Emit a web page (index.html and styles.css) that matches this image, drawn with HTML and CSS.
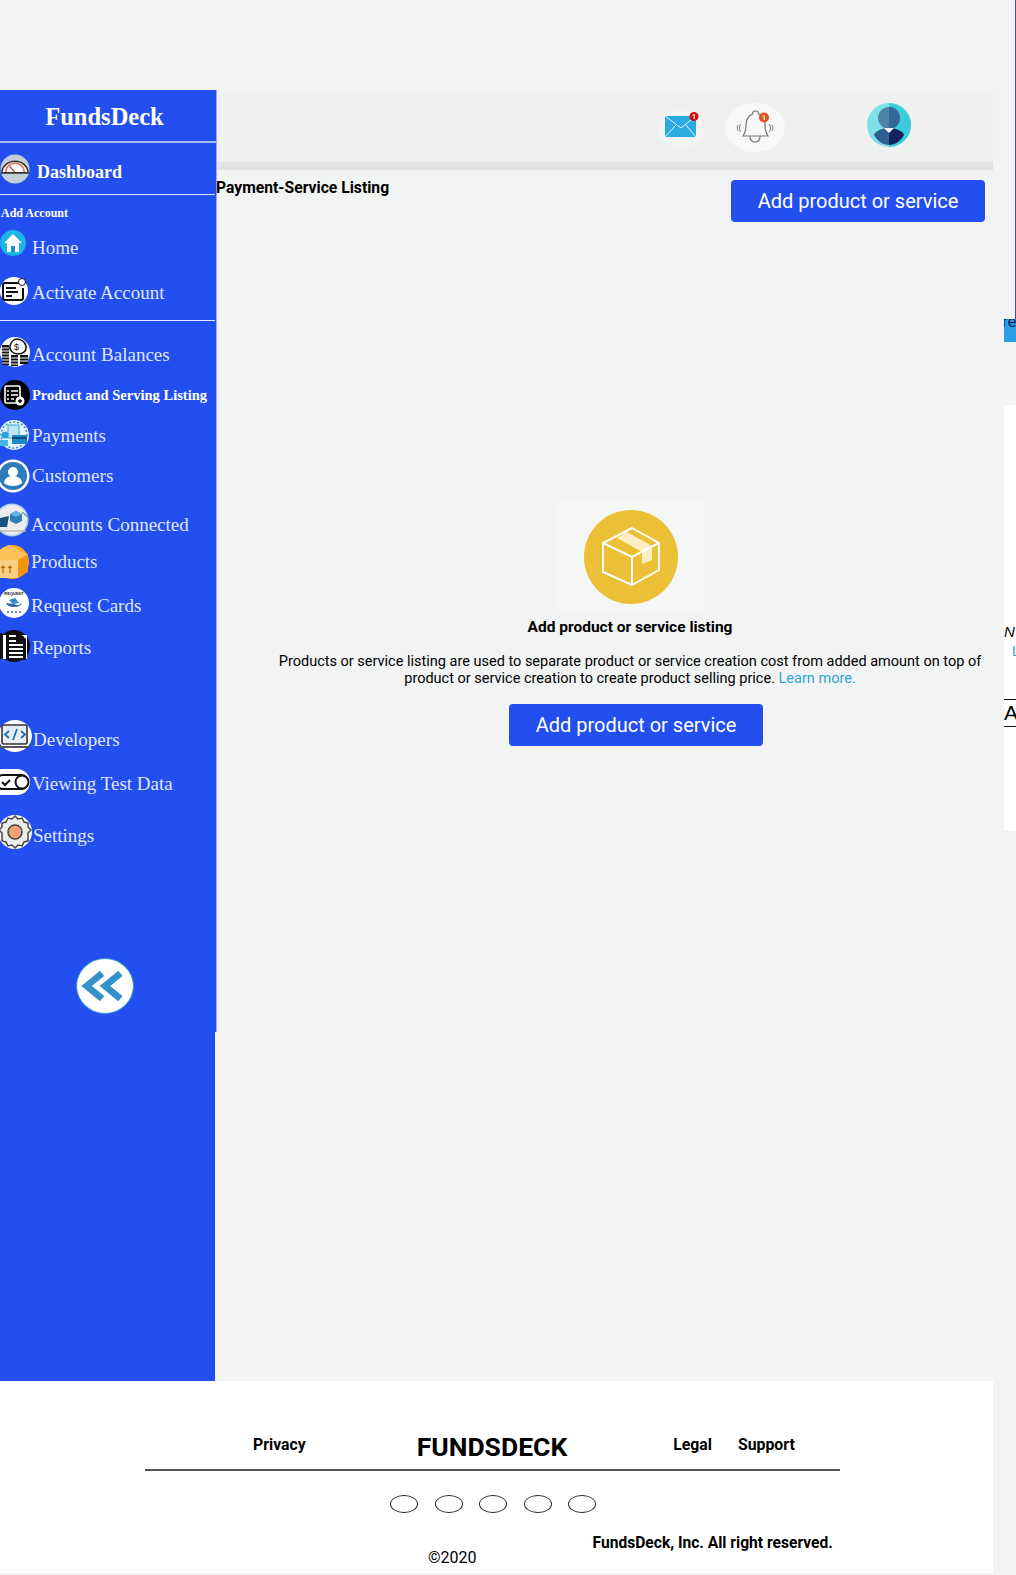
FILE: index.html
```html
<!DOCTYPE html>
<html lang="en">
<head>
  <meta charset="UTF-8">
  <meta name="viewport" content="width=device-width, initial-scale=1.0">
  <title>FundsDeck</title>
  <link rel="stylesheet" href="styles.css">
</head>
<body>
  <div class="layout">
    <aside class="sidebar">
      <div class="sidebar-top">
        <div class="brand">FundsDeck</div>
        <a class="dash">
          <svg class="ico" viewBox="0 0 32 30"><circle cx="15.500" cy="15" r="15" fill="#c3d0d8"/><path d="M2 19a13.500 12 0 0 1 27 0z" fill="#fff" stroke="#333" stroke-width="1.600"/><path d="M6 18a9.500 9 0 0 1 19 0" fill="none" stroke="#e2765a" stroke-width="1.800"/><path d="M15 18l-5-6" stroke="#b5432e" stroke-width="1.400"/></svg>
          <span>Dashboard</span>
        </a>
        <div class="group-title">Add Account</div>
        <a class="item down-2">
          <svg class="ico" viewBox="0 0 30 30"><circle cx="13" cy="14" r="13" fill="#1cb5e6"/><path d="M13 5L4 14h3v9h12v-9h3z" fill="#fff"/><rect x="11" y="17" width="4" height="6" fill="#1c8fd0"/></svg>
          <span>Home</span>
        </a>
        <a class="item gap-17">
          <svg class="ico" viewBox="0 0 30 30"><circle cx="14" cy="15" r="14" fill="#fff"/><path d="M20 7H5a2 2 0 0 0-2 2v13a2 2 0 0 0 2 2h16a2 2 0 0 0 2-2V12" fill="none" stroke="#111" stroke-width="2"/><path d="M6 12h10M6 16h12M6 20h6" stroke="#111" stroke-width="1.800"/><circle cx="22" cy="6" r="3.500" fill="#fff" stroke="#111" stroke-width="1"/></svg>
          <span>Activate Account</span>
        </a>
        <div class="rule"></div>
        <a class="item gap-16 down-1">
          <svg class="ico" viewBox="0 0 30 30"><circle cx="15" cy="15" r="15" fill="#fff"/><path d="M10 9c1-4 4-7 7-7s8 2 9 7-3 8-8 8-9-4-8-8z" fill="#fff" stroke="#111" stroke-width="1.500"/><text class="ico-dollar" x="14" y="13">$</text><path d="M2 8h7v20H2zM11 18h7v11h-7zM20 18h8v9h-8z" fill="#111"/><path d="M2 11h7M2 14h7M2 17h7M2 20h7M2 23h7M2 26h7M11 21h7M11 24h7M11 27h7M20 21h8M20 24h8" stroke="#fff"/></svg>
          <span>Account Balances</span>
        </a>
        <a class="item item-bold gap-13 up-1">
          <svg class="ico" viewBox="0 0 30 30"><circle cx="15" cy="15" r="15" fill="#000"/><rect x="5" y="6" width="15" height="17" rx="1.500" fill="none" stroke="#fff" stroke-width="1.600"/><path d="M7 11h2M11 11h7M7 15h2M11 15h7M7 19h2M11 19h3" stroke="#fff" stroke-width="1.600"/><circle cx="20" cy="21" r="4.500" fill="#fff"/><path d="M18 21h4M20 19v4" stroke="#000" stroke-width="1.300"/></svg>
          <span>Product and Serving Listing</span>
        </a>
        <a class="item gap-10 up-1">
          <svg class="ico" viewBox="0 0 30 30"><circle cx="14" cy="15" r="15" fill="#e6f6fb"/><circle cx="14" cy="15" r="13" fill="none" stroke="#2a92c9" stroke-width="1.500" stroke-dasharray="2 2"/><rect x="8" y="5" width="11" height="13" fill="#bfe6f5" stroke="#35a3d6"/><circle cx="5" cy="15" r="3.500" fill="#2aa0d8"/><rect x="12" y="15" width="15" height="9" rx="1" fill="#1d88c4"/><rect x="12" y="17" width="15" height="2" fill="#0c4a78"/><rect x="0" y="20" width="8" height="6" fill="#46b8e0"/></svg>
          <span>Payments</span>
        </a>
        <a class="item gap-11 up-2">
          <svg class="ico ico-34" viewBox="0 0 30 34"><circle cx="13" cy="17" r="16.500" fill="#fff"/><circle cx="13" cy="17" r="14" fill="#2b7cb9"/><circle cx="13" cy="13" r="5" fill="#fff"/><path d="M4 24c0-5 5-7 9-7s9 2 9 7c-2 2-6 3-9 3s-7-1-9-3z" fill="#fff"/></svg>
          <span>Customers</span>
        </a>
        <a class="item item-tight gap-14 down-3">
          <svg class="ico ico-34" viewBox="0 0 30 34"><circle cx="12" cy="17" r="16.500" fill="#a9d4ee"/><circle cx="12" cy="17" r="15" fill="#ececec"/><path d="M10 11l6-3 6 3v7l-6 3-6-3z" fill="#2d7fb5"/><path d="M16 8l6 3-6 3-6-3z" fill="#62b4e0"/><path d="M0 15l9-2-2 11H-3z" fill="#16557f"/><path d="M22 9l6 5" stroke="#7f97a8" stroke-width="1.500"/><path d="M-2 28h28" stroke="#bdbdbd" stroke-width="1.500"/></svg>
          <span>Accounts Connected</span>
        </a>
        <a class="item item-tight gap-12 up-2">
          <svg class="ico ico-34" viewBox="0 0 30 34"><circle cx="12" cy="17" r="17" fill="#fca91e"/><path d="M-3 6L9 0l19 9-8 8H-3z" fill="#fdc05a"/><rect x="-3" y="15" width="21" height="18" fill="#fbd084"/><path d="M18 15l10-6v18l-10 6z" fill="#ef9512"/><path d="M3 28v-7m-2 2l2-2 2 2M10 28v-7m-2 2l2-2 2 2" fill="none" stroke="#b86f0a" stroke-width="1.200"/></svg>
          <span>Products</span>
        </a>
        <a class="item item-tight gap-11 down-1">
          <svg class="ico" viewBox="0 0 30 30"><circle cx="14" cy="15" r="15" fill="#fff"/><text class="ico-tiny" x="14" y="7">REQUEST</text><path d="M6 15a8 4 0 0 0 16 0c-2 2-5 3-8 1z" fill="#2b6c9f"/><path d="M9 12l6-2 4 5-6 1z" fill="#2e8ac5"/><path d="M7 24h2M11 24h2M15 24h2M19 24h2" stroke="#3b6f96" stroke-width="1.500"/></svg>
          <span>Request Cards</span>
        </a>
        <a class="item gap-13">
          <svg class="ico ico-32" viewBox="0 0 30 32"><circle cx="14" cy="16" r="16" fill="#0c0c1e"/><path d="M1 5h26v24H1z" fill="#fff"/><path d="M6 2h13l7 7v21H6z" fill="#111"/><path d="M0 3h3v26H0z" fill="#111"/><path d="M9 6h7M9 11h7" stroke="#fff" stroke-width="2"/><path d="M9 15h14M9 19h14M9 23h14M9 27h14" stroke="#fff" stroke-width="2"/></svg>
          <span>Reports</span>
        </a>
        <a class="item item-wide gap-60 down-2">
          <svg class="ico ico-w32" viewBox="0 0 32 32"><ellipse cx="15" cy="16" rx="17" ry="16" fill="#fff"/><rect x="2" y="5" width="25" height="19" rx="1.500" fill="#e7eef3" stroke="#333" stroke-width="1.600"/><path d="M-1 26h30v2H-1z" fill="#555"/><path d="M9 11l-4 3.500 4 3.500M21 11l4 3.500-4 3.500M17 9l-4 11" fill="none" stroke="#1f6fb0" stroke-width="1.800"/></svg>
          <span>Developers</span>
        </a>
        <a class="item gap-16">
          <svg class="ico" viewBox="0 0 30 30"><rect x="-14" y="2" width="44" height="26" rx="13" fill="#fff"/><rect x="-4" y="8" width="32" height="14" rx="7" fill="#fff" stroke="#111" stroke-width="2"/><circle cx="22" cy="15" r="6.500" fill="#fff" stroke="#111" stroke-width="2"/><path d="M2 15l3 3 5-5" fill="none" stroke="#111" stroke-width="2"/></svg>
          <span>Viewing Test Data</span>
        </a>
        <a class="item item-wide gap-20 down-2">
          <svg class="ico ico-w36" viewBox="0 0 32 36"><circle cx="15" cy="18" r="17" fill="#fff"/><path d="M15 2l3 3 4-1 2 4 4 1 0 4 3 3-3 3 0 4 0 4-4 1-2 4-4-1-3 3-3-3-4 1-2-4-4-1 0-4 0-4-3-3 3-3 0-4 4-1 2-4 4 1z" fill="#ececec" stroke="#444" stroke-width="1.500"/><circle cx="15" cy="18" r="7" fill="#f4a273" stroke="#444" stroke-width="1.500"/></svg>
          <span>Settings</span>
        </a>
        <button class="collapse">
          <svg viewBox="0 0 56 56"><path d="M25 15L9 28l16 13M44 15L28 28l16 13" fill="none" stroke="#3392ca" stroke-width="7"/></svg>
        </button>
      </div>
    </aside>

    <main class="content">
      <header class="topbar">
        <div class="mail-pill">
          <svg viewBox="0 0 36 26" class="mail-icon"><rect x="2" y="4" width="31" height="21" fill="#2aabe2"/><path d="M2 4l16 12L33 4M2 25l11-12M33 25L23 13" fill="none" stroke="#e8f6fc" stroke-width="1"/><circle cx="31" cy="4.500" r="4.500" fill="#d40f14"/><text class="badge-num" x="31" y="6.500">1</text></svg>
        </div>
        <div class="bell-pill">
          <svg viewBox="0 0 40 36" class="bell-icon"><path d="M20 1c-1.500 0-2.500 1-2.500 3-4.500 2-6.500 6-6.500 11 0 5-1 8-3 11h25c-2-3-3-6-3-11 0-5-2-9-6.500-11 0-2-1-3-2.500-3z" fill="none" stroke="#777" stroke-width="1.200"/><path d="M15 26c0 4 2 6 5 6s5-2 5-6" fill="none" stroke="#777" stroke-width="1.200"/><path d="M6 14c-2 2-2 6 0 8M3 15c-1 2-1 4 0 6M34 14c2 2 2 6 0 8M37 15c1 2 1 4 0 6" fill="none" stroke="#777"/><circle cx="29" cy="7.500" r="5" fill="#e4521e"/><text class="badge-num" x="29" y="10">1</text></svg>
        </div>
        <svg viewBox="0 0 44 44" class="avatar"><circle cx="22" cy="22" r="22" fill="#7fe0ea"/><path d="M22 0a22 22 0 0 1 0 44z" fill="#3bcbdb"/><circle cx="22" cy="15" r="11" fill="#4f82a8"/><path d="M22 4a11 11 0 0 1 0 22z" fill="#33699a"/><path d="M7 32c1-4 8-6 11-7l4 4v13c-6 0-12-4-15-10z" fill="#2e5f8e"/><path d="M37 32c-1-4-8-6-11-7l-4 4v13c6 0 12-4 15-10z" fill="#12225a"/><path d="M17 25h10l-5 5z" fill="#fff"/></svg>
      </header>

      <div class="listing-head">
        <h2>Payment-Service Listing</h2>
        <button class="btn">Add product or service</button>
      </div>

      <section class="empty">
        <div class="empty-pic">
          <svg viewBox="0 0 94 94" class="box-icon"><circle cx="47" cy="47" r="47" fill="#ebc036"/><path d="M33 28l10-6 25 14v14l-10 4V42z" fill="#fbeec2"/><path d="M48 18l27 15v27L48 75 19 62V33z" fill="none" stroke="#fff" stroke-width="2"/><path d="M19 33l29 14 27-14M48 47v28" fill="none" stroke="#fff" stroke-width="2"/></svg>
        </div>
        <h3>Add product or service listing</h3>
        <p>Products or service listing are used to separate product or service creation cost from added amount on top of product or service creation to create product selling price. <a class="link">Learn more.</a></p>
        <button class="btn">Add product or service</button>
      </section>
    </main>
  </div>

  <footer class="footer">
    <div class="footer-links">
      <a class="privacy">Privacy</a>
      <span class="footer-logo">FUNDSDECK</span>
      <a class="legal">Legal</a>
      <a class="support">Support</a>
    </div>
    <div class="socials">
      <span class="dot"></span><span class="dot"></span><span class="dot"></span><span class="dot"></span><span class="dot"></span>
    </div>
    <div class="footer-bottom">
      <span class="year">©2020</span>
      <span class="rights">FundsDeck, Inc. All right reserved.</span>
    </div>
  </footer>

  <!-- clipped bits of the page behind, at the window's right edge -->
  <div class="edge-line"></div>
  <div class="edge-chip"><span>re</span></div>
  <div class="edge-panel">
    <i class="edge-n">N</i>
    <span class="edge-l">L</span>
    <span class="edge-a">A</span>
  </div>
</body>
</html>
```

FILE: styles.css
```css
body {
  margin: 0;
  width: 1016px;
  height: 1575px;
  overflow: hidden;
  position: relative;
  background-color: #f2f4f4;
  font-family: Roboto, Arial, sans-serif;
  color: #000;
}
.layout {
  display: flex;
  width: 993px;
  height: 1291px;
  padding-top: 90px;
}

/* sidebar */
.sidebar {
  width: 215px;
  flex-shrink: 0;
  background-color: #234ff0;
  color: #dfe6fd;
  font-family: "Liberation Serif", serif;
}
.sidebar-top {
  box-sizing: border-box;
  width: 217px;
  height: 942px;
  background-color: #234ff0;
  border-right: 1px solid #93a8f7;
}
.brand {
  height: 51px;
  line-height: 53px;
  padding-right: 7px;
  text-align: center;
  font-size: 24.500px;
  font-weight: bold;
  color: #fff;
  border-bottom: 2px solid #a5b7f8;
}
.dash {
  display: flex;
  align-items: center;
  gap: 6px;
  height: 51px;
  margin-right: 1px;
  font-size: 18px;
  font-weight: bold;
  color: #fff;
  border-bottom: 1px solid #dfe6fd;
}
.dash span {
  padding-top: 7px;
}
.dash .ico {
  width: 31px;
  height: 30px;
}
.group-title {
  padding-left: 1px;
  margin-top: 10px;
  line-height: 16px;
  font-size: 12px;
  font-weight: bold;
  color: #fff;
}
.item {
  display: flex;
  align-items: center;
  height: 30px;
  margin-top: 8px;
  font-size: 19px;
}
.item span {
  margin-left: 32px;
  padding-top: 3px;
  white-space: nowrap;
}
.item .ico {
  width: 30px;
  height: 30px;
  margin-right: -30px;
  flex-shrink: 0;
}
.item .ico-34 {
  height: 34px;
}
.item .ico-32 {
  height: 32px;
}
.item .ico-w32 {
  width: 32px;
  height: 32px;
  margin-right: -32px;
}
.item .ico-w36 {
  width: 32px;
  height: 36px;
  margin-right: -32px;
}
.item-tight span {
  margin-left: 31px;
}
.item-wide span {
  margin-left: 33px;
}
.item-bold {
  font-size: 14.500px;
  font-weight: bold;
  color: #fff;
}
/* the labels don't sit centred on their icons, each one is off a little */
.down-1 span { padding-top: 5px; }
.down-2 span { padding-top: 7px; }
.down-3 span { padding-top: 9px; }
.up-1 span { padding-top: 1px; }
.up-2 span { padding: 0 0 1px; }
.gap-10 { margin-top: 10px; }
.gap-11 { margin-top: 11px; }
.gap-12 { margin-top: 12px; }
.gap-13 { margin-top: 13px; }
.gap-14 { margin-top: 14px; }
.gap-16 { margin-top: 16px; }
.gap-17 { margin-top: 17px; }
.gap-20 { margin-top: 20px; }
.gap-60 { margin-top: 60px; }
.rule {
  height: 1px;
  margin: 14px 1px 0 0;
  background-color: #dfe6fd;
}
.ico-dollar {
  font-family: "Liberation Sans", sans-serif;
  font-size: 9px;
  fill: #111;
}
.ico-tiny {
  font-family: "Liberation Sans", sans-serif;
  font-size: 4px;
  font-weight: bold;
  text-anchor: middle;
  fill: #222;
}
.collapse {
  display: block;
  width: 58px;
  height: 56px;
  margin: 111px 0 0 76px;
  padding: 0;
  border: 1px solid #3392ca;
  border-radius: 50%;
  background-color: #fff;
}
.collapse svg {
  display: block;
  width: 100%;
  height: 100%;
}

/* main column */
.content {
  flex: 1;
  min-width: 0;
  padding-top: 4px;
}
.topbar {
  display: flex;
  align-items: flex-start;
  box-sizing: border-box;
  height: 76px;
  margin-left: 2px;
  padding: 9px 0 0 441px;
  background: linear-gradient(to bottom, #eff1f1 89%, #e3e5e4 90%, #dfe1e0 100%);
}
.mail-pill {
  display: flex;
  justify-content: center;
  width: 46px;
  height: 38px;
  margin-top: 7px;
  border-radius: 50%;
  background-color: #f4f4f4;
}
.mail-icon {
  width: 36px;
  height: 26px;
  margin-top: 2px;
}
.bell-pill {
  display: flex;
  align-items: center;
  justify-content: center;
  width: 60px;
  height: 49px;
  margin-left: 21px;
  border-radius: 50%;
  background-color: #f8f8f8;
}
.bell-icon {
  width: 40px;
  height: 36px;
}
.badge-num {
  font-family: Roboto, sans-serif;
  font-size: 7px;
  font-weight: bold;
  text-anchor: middle;
  fill: #fff;
}
.avatar {
  width: 44px;
  height: 44px;
  margin-left: 82px;
}
.listing-head {
  display: flex;
  justify-content: space-between;
  align-items: flex-start;
  padding: 10px 8px 0 1px;
}
.listing-head h2 {
  margin: -1px 0 0;
  font-size: 15.700px;
  line-height: 18px;
  font-weight: bold;
  font-family: Roboto, Arial, sans-serif;
}
.btn {
  width: 254px;
  height: 42px;
  padding: 0;
  border: none;
  border-radius: 4px;
  background-color: #234ff0;
  color: #fff;
  font-family: Roboto, Arial, sans-serif;
  font-size: 20px;
}

/* empty state */
.empty {
  width: 708px;
  margin: 280px 0 0 61px;
  text-align: center;
  font-family: Roboto, Arial, sans-serif;
}
.empty-pic {
  display: flex;
  align-items: center;
  justify-content: center;
  width: 147px;
  height: 109px;
  margin: 0 auto;
  background-color: #f5f6f6;
}
.box-icon {
  width: 94px;
  height: 94px;
  margin-left: 2px;
}
.empty h3 {
  margin: 7px 0 0;
  font-size: 15.500px;
  line-height: 18px;
  font-weight: bold;
}
.empty p {
  margin: 17px 0 0;
  font-size: 14.500px;
  line-height: 17px;
}
.link {
  color: #2fa3d6;
}
.empty .btn {
  display: block;
  margin: 17px 0 0 233px;
}

/* footer */
.footer {
  box-sizing: border-box;
  width: 993px;
  height: 192px;
  background-color: #fff;
  padding: 50px 0 0 145px;
}
.footer-links {
  display: flex;
  align-items: center;
  box-sizing: border-box;
  width: 695px;
  height: 40px;
  font-size: 15.800px;
  font-weight: bold;
  border-bottom: 2px solid #555;
}
.privacy { margin-left: 108px; margin-bottom: 12px; }
.footer-logo {
  margin-left: 111px;
  margin-bottom: 7px;
  font-size: 26.500px;
  font-family: Roboto, sans-serif;
}
.legal { margin-left: 106px; margin-bottom: 12px; }
.support { margin-left: 26px; margin-bottom: 12px; }
.socials {
  display: flex;
  gap: 16.500px;
  margin: 24px 0 0 245px;
}
.dot {
  box-sizing: border-box;
  width: 28px;
  height: 18px;
  border: 1.500px solid #222;
  border-radius: 50%;
}
.footer-bottom {
  display: flex;
  align-items: flex-start;
  margin-top: 21px;
}
.year {
  margin: 15px 0 0 283px;
  font-size: 16px;
  line-height: 18px;
}
.rights {
  margin-left: 116px;
  font-size: 15.600px;
  line-height: 18px;
  font-weight: bold;
}

/* right edge leftovers */
.edge-line {
  position: absolute;
  left: 1015px;
  top: 0;
  width: 1px;
  height: 320px;
  background-color: #3b56a8;
}
.edge-chip {
  position: absolute;
  left: 1004px;
  top: 319px;
  width: 12px;
  height: 23px;
  overflow: hidden;
  background-color: #2a9fe8;
}
.edge-chip span {
  position: absolute;
  left: -2px;
  top: -8px;
  font-size: 17px;
  line-height: 20px;
  color: #12285a;
}
.edge-panel {
  position: absolute;
  left: 1004px;
  top: 405px;
  width: 12px;
  height: 426px;
  overflow: hidden;
  background-color: #fff;
}
.edge-n {
  position: absolute;
  left: 0;
  top: 218px;
  font-size: 15px;
  font-family: "Liberation Sans", sans-serif;
}
.edge-l {
  position: absolute;
  left: 8px;
  top: 238px;
  font-size: 14px;
  color: #2fa3d6;
  font-family: "Liberation Sans", sans-serif;
}
.edge-a {
  position: absolute;
  left: 0;
  top: 294px;
  width: 12px;
  height: 26px;
  line-height: 26px;
  font-size: 21px;
  border-top: 1px solid #111;
  border-bottom: 1px solid #111;
  font-family: "Liberation Sans", sans-serif;
}
```
